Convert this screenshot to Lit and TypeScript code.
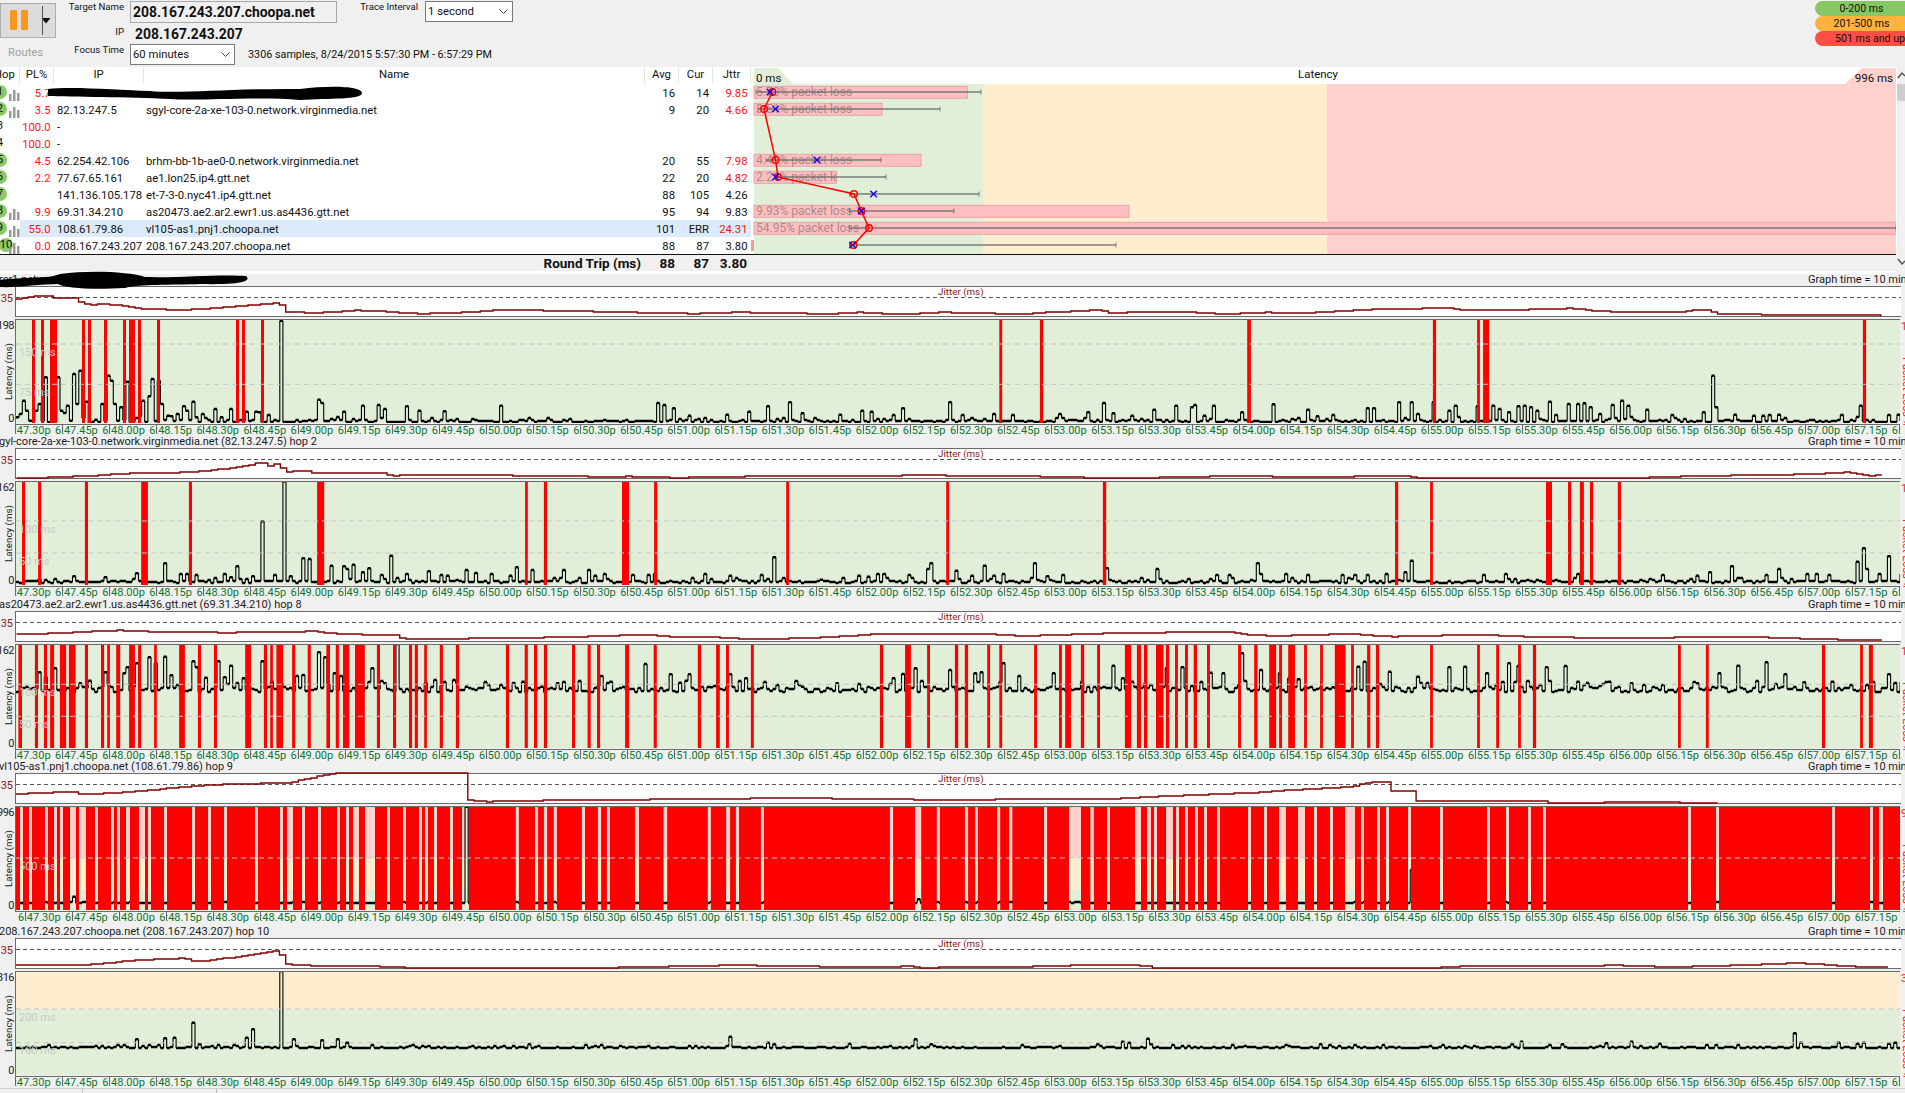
import { LitElement, html, css, svg, unsafeCSS } from "lit";
import { customElement, property } from "lit/decorators.js";

const UI = unsafeCSS(`Roboto, "Liberation Sans", sans-serif`);
const PX = 3.14;
const LEFT = 15;
const W = 1885;

// ---- helpers: numbers below are read in reference-crop coordinates
const xs = (ox: number, s: number, a: number[]) => a.map((v) => ox + v / s);
const pairs = (ox: number, oy: number, sx: number, a: number[]) => {
  const out: [number, number][] = [];
  for (let i = 0; i < a.length; i += 2) out.push([ox + a[i] / sx, oy + a[i + 1] / 3]);
  return out;
};

interface Cfg {
  title: string;
  top: number; // absolute y of latency plot top
  max: string;
  bands: { from: number; to: number; fill: string }[];
  grid: { y: number; label: string }[];
  bars: number[];
  jitterTop: number;
  jitter: [number, number][];
  base: number;
  spikes: [number, number][];
  noise: number;
  seed: number;
  offset: number;
  extra?: boolean;
}

const GREEN = "#e1efd8";
const ORANGE = "#ffedd0";
const PINK = "#ffd1cd";

const hop1Bars = [
  ...xs(0, 3, [93, 102, 120, 129, 147, 168, 243, 252, 261, 270, 309, 318, 366, 375, 384, 402, 411, 420, 468, 477, 705, 714, 723, 732, 780, 789]),
  ...xs(650, 2.412, [840, 847, 938, 946, 1438, 1447]),
  ...xs(1280, 2.509, [381, 389, 492, 499, 507, 522, 1460, 1468]),
];
const hop2Bars = [
  ...xs(0, 2.24, [47, 54, 83, 90, 188, 195, 314, 329, 421, 428, 708, 724, 1174, 1180, 1216, 1223, 1391, 1407, 1463, 1470]),
  ...xs(650, 2.412, [326, 333, 712, 719, 1090, 1098]),
  ...xs(1280, 2.509, [286, 294, 374, 381, 665, 680, 720, 728, 750, 760, 775, 783, 845, 853]),
];
const hop8Bars = [
  ...xs(0, 2.24, [39, 47, 76, 83, 96, 103, 110, 119, 132, 146, 152, 167, 188, 195, 224, 231, 238, 244, 258, 267, 287, 300, 307, 314, 343, 349, 399, 412, 441, 448, 477, 484, 547, 560, 589, 596, 603, 609, 617, 632, 652, 659, 687, 694, 729, 737, 750, 757, 766, 780, 793, 815, 842, 849, 878, 885, 914, 921, 927, 934, 948, 954, 983, 990, 1019, 1026, 1131, 1138, 1173, 1180, 1194, 1201, 1216, 1223, 1279, 1286, 1314, 1321, 1335, 1342, 1398, 1407, 1462, 1469]),
  ...xs(650, 2.412, [113, 121, 157, 166, 181, 188, 241, 248, 552, 560, 613, 627, 666, 673, 733, 741, 757, 765, 811, 818, 840, 847, 924, 931, 984, 991, 999, 1013, 1037, 1045, 1076, 1083, 1143, 1158, 1172, 1182, 1189, 1197, 1218, 1236, 1242, 1250, 1264, 1271, 1288, 1295, 1309, 1317, 1341, 1348, 1416, 1423, 1455, 1463, 1491, 1508, 1515, 1522]),
  ...xs(1280, 2.509, [18, 35, 58, 65, 98, 105, 135, 162, 176, 183, 216, 224, 238, 246, 374, 381, 492, 499, 540, 547, 595, 602, 632, 640, 996, 1003, 1066, 1073, 1357, 1365, 1453, 1460, 1475, 1485]),
];
// hop 9 is the other way round: read as the gaps in a solid red field
const hop9Gaps = [
  ...xs(0, 3, [57, 66, 84, 93, 132, 141, 159, 168, 177, 186, 207, 225, 234, 255, 282, 291, 330, 339, 348, 357, 375, 387, 414, 432, 441, 450, 489, 498, 573, 582, 621, 630, 669, 678, 762, 771, 837, 846, 858, 876, 903, 912, 951, 960, 1008, 1017, 1035, 1044, 1056, 1074, 1092, 1122, 1158, 1167, 1206, 1215, 1254, 1263, 1272, 1281, 1299, 1308, 1347, 1356, 1383, 1404]),
  ...xs(480, 2.24, [78, 85, 121, 128, 141, 148, 163, 170, 226, 233, 262, 269, 282, 289, 345, 354, 409, 417, 508, 515, 549, 558, 571, 578, 627, 634, 916, 923, 972, 986, 1021, 1028, 1084, 1091, 1107, 1113, 1156, 1163, 1183, 1190, 1261, 1268, 1317, 1344, 1365, 1373]),
  ...xs(1100, 3, [18, 27, 102, 120, 138, 150, 159, 168, 195, 216, 225, 234, 252, 261, 282, 291, 309, 318, 348, 357, 441, 450, 489, 498, 534, 555, 591, 612, 639, 648, 687, 696, 732, 762, 780, 789, 828, 837, 855, 864, 921, 930, 1017, 1026, 1158, 1167, 1215, 1224, 1281, 1290, 1326, 1335]),
  ...xs(1500, 3, [561, 570, 645, 654, 993, 1002, 1107, 1116, 1134, 1146]),
];
const gapsToBars = (g: number[]) => [LEFT, ...g, 1900];

const CONFIG: Cfg[] = [
  {
    title: "rcr1.network hop 1",
    top: 319.5,
    max: "198",
    bands: [{ from: 319.5, to: 425.5, fill: GREEN }],
    grid: [{ y: 345, label: "150 ms" }, { y: 385.3, label: "75 ms" }],
    bars: hop1Bars,
    jitterTop: 286.5,
    jitter: [
      ...pairs(0, 270, 3, [44, 90, 70, 86, 110, 80, 135, 80, 150, 88, 200, 88, 215, 86, 230, 98, 260, 108, 300, 105, 340, 108, 400, 118, 460, 120, 520, 124, 600, 120, 700, 112, 800, 105, 830, 97, 845, 130, 950, 131, 1060, 124, 1150, 128, 1250, 134, 1400, 130, 1500, 122]),
      ...pairs(650, 280, 2.412, [100, 104, 200, 100, 330, 102, 420, 105, 490, 100, 600, 106, 700, 100, 800, 103, 900, 105, 950, 100, 1030, 96, 1080, 92, 1100, 102, 1200, 98, 1300, 100, 1380, 105, 1480, 100]),
      ...pairs(1280, 280, 2.509, [0, 103, 100, 100, 200, 92, 300, 90, 420, 86, 440, 94, 600, 92, 720, 88, 800, 97, 900, 100, 1000, 98, 1060, 90, 1090, 105, 1240, 107, 1360, 108, 1440, 108, 1515, 110]),
    ],
    base: 423.5,
    spikes: [
      ...pairs(0, 270, 3, [45, 445, 55, 435, 65, 395, 75, 425, 85, 455, 105, 425, 115, 405, 130, 325, 140, 460, 172, 325, 180, 425, 190, 432, 200, 410, 208, 455, 217, 315, 228, 405, 238, 305, 255, 398, 265, 462, 275, 458, 285, 452, 300, 405, 320, 320, 330, 335, 340, 405, 350, 455, 360, 415, 378, 338, 388, 460, 410, 442, 425, 395, 440, 382, 450, 330, 465, 335, 480, 405, 495, 440, 510, 442, 525, 435, 540, 412, 555, 425, 568, 398, 580, 445, 605, 435, 640, 420, 660, 445, 690, 420, 735, 428, 760, 428, 775, 430, 800, 438, 840, 155, 950, 392, 960, 402, 1020, 428, 1085, 410, 1130, 408, 1150, 420, 1215, 412, 1250, 425, 1330, 427, 1498, 410]),
      ...pairs(650, 280, 2.412, [10, 372, 25, 378, 55, 388, 92, 410, 178, 407, 230, 398, 275, 382, 328, 370, 365, 403, 450, 407, 502, 395, 532, 398, 578, 408, 607, 388, 715, 370, 745, 408, 825, 405, 870, 408, 982, 405, 1048, 400, 1086, 302, 1092, 372, 1108, 403, 1160, 410, 1207, 392, 1260, 380, 1300, 385, 1310, 378, 1330, 410, 1352, 380, 1420, 400, 1495, 376]),
      ...pairs(1280, 280, 2.509, [68, 392, 85, 412, 130, 408, 212, 388, 226, 388, 290, 370, 322, 370, 340, 405, 378, 370, 415, 395, 433, 310, 437, 380, 490, 382, 525, 380, 545, 390, 570, 400, 590, 382, 605, 380, 620, 385, 640, 395, 670, 368, 690, 408, 720, 375, 740, 375, 755, 373, 775, 385, 800, 405, 828, 378, 848, 365, 868, 380, 912, 392, 975, 408, 1055, 400, 1077, 290, 1085, 385, 1135, 407, 1180, 410, 1204, 410, 1220, 408, 1248, 407, 1405, 408, 1450, 380, 1520, 408, 1545, 407]),
    ],
    noise: 2.5,
    seed: 11,
    offset: -7,
  },
  {
    title: "gyl-core-2a-xe-103-0.network.virginmedia.net (82.13.247.5) hop 2",
    top: 481.5,
    max: "162",
    bands: [{ from: 481.5, to: 587.5, fill: GREEN }],
    grid: [{ y: 522, label: "100 ms" }, { y: 554, label: "50 ms" }],
    bars: hop2Bars,
    jitterTop: 448.5,
    jitter: [
      ...pairs(0, 440, 2.24, [35, 116, 100, 116, 105, 113, 200, 112, 210, 108, 300, 102, 420, 100, 480, 92, 550, 80, 580, 68, 590, 82, 620, 73, 630, 98, 680, 96, 700, 102, 850, 102, 870, 110, 950, 108, 1100, 109, 1300, 112, 1350, 116, 1400, 112, 1500, 116]),
      ...pairs(650, 280, 2.412, [130, 595, 300, 590, 500, 592, 650, 588, 800, 592, 920, 592, 1050, 596, 1200, 596, 1450, 590]),
      ...pairs(1280, 280, 2.509, [0, 594, 240, 592, 300, 590, 330, 596, 900, 596, 1000, 592, 1200, 588, 1300, 586, 1420, 580, 1470, 590, 1510, 588, 1522, 596]),
    ],
    base: 584,
    spikes: [
      ...pairs(0, 440, 2.24, [162, 412, 233, 415, 303, 403, 367, 373, 396, 405, 410, 405, 437, 408, 500, 405, 515, 415, 528, 382, 560, 412, 585, 247, 610, 408, 628, 127, 645, 412, 677, 358, 691, 360, 740, 380, 762, 382, 770, 390, 789, 377, 810, 400, 820, 388, 852, 408, 868, 350, 908, 405, 958, 397, 985, 408, 1000, 410, 1042, 393, 1060, 402, 1098, 405, 1136, 410, 1155, 385, 1190, 393, 1254, 393, 1311, 393, 1325, 410, 1346, 405, 1410, 408, 1450, 408, 1460, 405, 1548, 415]),
      ...pairs(650, 280, 2.412, [100, 897, 124, 885, 185, 890, 260, 888, 297, 835, 405, 902, 458, 897, 495, 890, 518, 893, 542, 885, 562, 885, 622, 888, 662, 870, 669, 853, 735, 875, 770, 890, 798, 860, 825, 890, 843, 885, 920, 853, 955, 892, 987, 888, 1100, 868, 1215, 870, 1360, 888, 1395, 888, 1458, 853, 1465, 885, 1525, 885]),
      ...pairs(1280, 280, 2.509, [62, 888, 150, 888, 180, 888, 212, 888, 258, 885, 322, 845, 310, 880, 502, 888, 558, 885, 738, 885, 952, 888, 1040, 890, 1070, 880, 1125, 862, 1218, 888, 1242, 870, 1315, 885, 1340, 885, 1370, 888, 1440, 848, 1456, 808, 1465, 870, 1498, 885, 1518, 832, 1550, 885]),
    ],
    noise: 2.5,
    seed: 23,
    offset: -7,
  },
  {
    title: "as20473.ae2.ar2.ewr1.us.as4436.gtt.net (69.31.34.210) hop 8",
    top: 643.5,
    max: "162",
    bands: [{ from: 643.5, to: 749.5, fill: GREEN }],
    grid: [{ y: 684.3, label: "100 ms" }, { y: 716.3, label: "50 ms" }],
    bars: hop8Bars,
    jitterTop: 610.5,
    jitter: [
      ...pairs(0, 440, 2.24, [35, 582, 120, 580, 200, 574, 260, 571, 350, 576, 400, 575, 500, 578, 700, 574, 750, 582, 880, 586, 900, 596, 1000, 596, 1170, 594, 1290, 590, 1430, 584, 1500, 590]),
      ...pairs(650, 280, 2.412, [150, 1072, 240, 1078, 380, 1074, 550, 1062, 800, 1062, 900, 1068, 1100, 1060, 1180, 1058, 1400, 1056, 1440, 1066]),
      ...pairs(1280, 280, 2.509, [0, 1067, 100, 1064, 170, 1062, 270, 1070, 480, 1064, 660, 1072, 900, 1074, 1000, 1072, 1200, 1072, 1370, 1078, 1470, 1080, 1522, 1082]),
    ],
    base: 692,
    spikes: [
      ...pairs(0, 440, 2.24, [86, 697, 95, 712, 121, 685, 172, 730, 198, 722, 233, 697, 270, 700, 283, 682, 302, 670, 332, 652, 340, 670, 367, 650, 378, 706, 425, 664, 433, 682, 458, 713, 487, 664, 495, 712, 515, 677, 543, 715, 585, 664, 600, 725, 660, 708, 677, 705, 712, 637, 726, 652, 743, 700, 760, 708, 825, 685, 860, 730, 888, 612, 968, 720, 1012, 720, 1040, 740, 1090, 735, 1115, 735, 1163, 725, 1205, 740, 1240, 730, 1345, 708, 1362, 725, 1443, 672, 1500, 703, 1517, 728, 1535, 722]),
      ...pairs(650, 280, 2.412, [45, 1183, 68, 1208, 92, 1183, 140, 1222, 190, 1183, 207, 1203, 223, 1195, 298, 1215, 360, 1220, 442, 1210, 585, 1195, 605, 1182, 638, 1165, 716, 1170, 775, 1180, 797, 1177, 850, 1150, 888, 1188, 965, 1180, 1035, 1205, 1115, 1157, 1133, 1195, 1160, 1205, 1200, 1215, 1240, 1165, 1275, 1162, 1300, 1218, 1350, 1178, 1380, 1180, 1425, 1120, 1465, 1170, 1510, 1180]),
      ...pairs(1280, 280, 2.509, [15, 1195, 40, 1198, 130, 1222, 187, 1160, 203, 1145, 268, 1175, 338, 1190, 415, 1162, 455, 1160, 510, 1165, 517, 1180, 565, 1150, 590, 1158, 660, 1162, 708, 1158, 740, 1205, 795, 1218, 820, 1205, 875, 1210, 910, 1215, 1042, 1210, 1095, 1180, 1140, 1157, 1213, 1147, 1258, 1183, 1312, 1207, 1380, 1205, 1425, 1215, 1518, 1183]),
    ],
    noise: 5,
    seed: 37,
    offset: -7,
  },
  {
    title: "vl105-as1.pnj1.choopa.net (108.61.79.86) hop 9",
    top: 805.5,
    max: "996",
    bands: [
      { from: 805.5, to: 858, fill: PINK },
      { from: 858, to: 890, fill: ORANGE },
      { from: 890, to: 911.5, fill: GREEN },
    ],
    grid: [{ y: 858, label: "500 ms" }],
    bars: gapsToBars(hop9Gaps),
    jitterTop: 772.5,
    jitter: [
      ...pairs(0, 760, 3, [44, 102, 140, 98, 215, 95, 230, 103, 350, 98, 500, 85, 630, 74, 860, 68, 960, 46, 1020, 38, 1390, 38, 1393, 115, 1405, 124, 1450, 124]),
      ...pairs(480, 770, 2.24, [0, 95, 85, 92, 420, 88, 640, 85, 920, 86, 980, 90, 1200, 88, 1470, 85]),
      ...pairs(1100, 770, 3, [0, 85, 120, 82, 240, 76, 450, 68, 600, 58, 750, 50, 790, 38, 860, 34, 862, 64, 928, 64, 930, 94, 1330, 94, 1335, 98, 1500, 98]),
      ...pairs(1500, 760, 3, [130, 126, 650, 128]),
    ],
    base: 903,
    spikes: [
      ...pairs(0, 760, 3, [219, 410, 1389, 140]),
      ...pairs(480, 770, 2.24, [975, 388]),
      ...pairs(1100, 770, 3, [925, 300]),
    ],
    noise: 0.6,
    seed: 41,
    offset: 3,
    extra: true,
  },
  {
    title: "208.167.243.207.choopa.net (208.167.243.207) hop 10",
    top: 969.5,
    max: "316",
    bands: [
      { from: 969.5, to: 1008, fill: ORANGE },
      { from: 1008, to: 1075.5, fill: GREEN },
    ],
    grid: [{ y: 1008, label: "200 ms" }, { y: 1041.7, label: "100 ms" }],
    bars: [],
    jitterTop: 936.5,
    jitter: [
      ...pairs(0, 760, 3, [44, 612, 100, 612, 110, 613, 280, 610, 360, 602, 400, 597, 540, 592, 570, 600, 610, 600, 740, 582, 830, 568, 845, 610, 960, 615, 1100, 615, 1210, 620, 1440, 620]),
      ...pairs(480, 770, 2.24, [0, 590, 300, 590, 335, 587, 500, 586, 550, 581, 620, 584, 830, 588, 960, 586, 980, 590, 1185, 587, 1280, 586, 1350, 581, 1490, 584]),
      ...pairs(1100, 770, 3, [0, 584, 50, 580, 140, 584, 150, 590, 370, 590, 850, 590, 1000, 590, 1080, 586, 1250, 584, 1500, 584]),
      ...pairs(1500, 760, 3, [0, 614, 300, 612, 500, 618, 800, 610, 880, 606, 1080, 618, 1170, 620]),
    ],
    base: 1047.5,
    spikes: [
      ...pairs(0, 760, 3, [405, 835, 490, 832, 515, 830, 568, 785, 595, 850, 730, 830, 755, 805, 840, 630, 877, 835, 963, 838, 1010, 835, 1030, 845]),
      ...pairs(480, 770, 2.24, [108, 820, 558, 797, 637, 815, 655, 820, 825, 818, 972, 805, 1008, 820, 1380, 820, 1432, 812, 1445, 815, 1488, 802]),
      ...pairs(1100, 770, 3, [57, 812, 75, 815, 132, 803, 150, 820, 388, 822, 650, 820, 678, 822, 980, 825, 1225, 820, 1255, 812, 1378, 822]),
      ...pairs(1500, 760, 3, [55, 842, 175, 850, 310, 847, 385, 842, 470, 848, 640, 852, 880, 817, 895, 845, 1005, 845, 1065, 848, 1085, 845, 1155, 848, 1175, 845]),
    ],
    noise: 1.6,
    seed: 53,
    offset: -7,
  },
];

function rng(seed: number) {
  let s = seed * 9973 + 7;
  return () => {
    s = (s * 16807) % 2147483647;
    return (s & 0xffff) / 0xffff;
  };
}

// the trace is a step line: flats come out heavy and risers thin in the reference
function latencyPaths(c: Cfg): { flats: string; risers: string } {
  const r = rng(c.seed);
  const n = Math.ceil(W / PX);
  const ys: number[] = [];
  for (let i = 0; i < n; i++) {
    const v = r();
    let y = c.base - r() * c.noise;
    if (v > 0.9) y -= c.noise * 1.2;
    ys.push(Math.round(y));
  }
  for (const [x, y] of c.spikes) {
    const i = Math.round((x - LEFT) / PX);
    if (i >= 0 && i < n) ys[i] = y;
  }
  const off = c.top + 1.5;
  let flats = "";
  let risers = "";
  ys.forEach((y, i) => {
    const a = (i * PX).toFixed(1);
    const b = ((i + 1) * PX).toFixed(1);
    const yy = (y - off).toFixed(1);
    flats += `M${a} ${yy}H${b}`;
    if (i + 1 < n) risers += `M${b} ${yy}V${(ys[i + 1] - off).toFixed(1)}`;
  });
  return { flats, risers };
}

function jitterPath(c: Cfg): string {
  const p = c.jitter;
  const startX = p[0][0];
  const endX = p[p.length - 1][0];
  let d = "";
  let j = 0;
  for (let x = startX; x <= endX; x += PX * 2) {
    while (j < p.length - 2 && p[j + 1][0] < x) j++;
    const [x0, y0] = p[j];
    const [x1, y1] = p[j + 1];
    const t = x1 === x0 ? 1 : Math.min(1, Math.max(0, (x - x0) / (x1 - x0)));
    const y = Math.round(y0 + (y1 - y0) * t) - c.jitterTop - 1.5;
    const X = (x - LEFT).toFixed(1);
    d += d ? `H${X}V${y}` : `M${X} ${y}`;
  }
  return d;
}

function axisLabels(): string[] {
  const out: string[] = [];
  let m = 47;
  let s = 30;
  for (let i = 0; i < 41; i++) {
    out.push(`6:${m}.${String(s).padStart(2, "0")}p`);
    s += 15;
    if (s === 60) {
      s = 0;
      m++;
    }
  }
  return out;
}
const LABELS = axisLabels();

@customElement("hop-graph")
class HopGraph extends LitElement {
  @property({ attribute: false }) cfg!: Cfg;

  static styles = css`
    :host { display: block; font-family: ${UI}; }
    .title { height: 12px; display: flex; justify-content: space-between; font-size: 11px; line-height: 12px; color: #1c1c1c; white-space: nowrap; overflow: hidden; }
    .title .name { margin-left: -1px; }
    .title .time { width: 97px; flex: none; }
    .row { display: flex; }
    .gutter { width: 15px; flex: none; display: flex; flex-direction: column; align-items: flex-end; }
    .right { flex: 1; overflow: hidden; }
    .jit { height: 31px; }
    .jit .num { color: #8a2020; font-size: 11px; line-height: 12px; margin: 7px 2px 0 0; }
    .jplot { width: 1886px; height: 31px; background: #fff; border-top: 1.5px solid #6a6a6a; border-bottom: 1.5px solid #6a6a6a; border-left: 1px solid #6a6a6a; box-sizing: border-box; flex: none; position: relative; }
    .jplot svg { overflow: visible; }
    .jitter-cap { position: absolute; left: 922px; top: -1px; font-size: 9.8px; line-height: 11px; color: #8a2020; }
    svg { display: block; }
    .lat { height: 106px; margin-top: 2px; }
    .lplot { width: 1885px; height: 106px; border-top: 1.5px solid #6a6a6a; border-bottom: 1.5px solid #6a6a6a; border-left: 1px solid #6a6a6a; box-sizing: border-box; flex: none; overflow: hidden; }
    .gutter .top, .gutter .zero { font-size: 11px; line-height: 13px; color: #222; white-space: nowrap; margin-right: 1px; letter-spacing: -0.5px; }
    .gutter .mid { flex: 1; display: flex; align-items: center; justify-content: center; width: 15px; padding-left: 3px; box-sizing: border-box; }
    .vert { writing-mode: vertical-rl; transform: rotate(180deg); font-size: 9.8px; line-height: 12px; color: #222; white-space: nowrap; }
    .right .loss { writing-mode: vertical-rl; color: #ff2020; font-size: 11px; line-height: 12px; white-space: nowrap; margin: 24px 0 0 0; }
    .right .r35 { color: #ff2020; font-size: 11px; line-height: 12px; margin: 2px 0 0 1px; white-space: nowrap; }
    .axis { height: 11.5px; margin-left: 15px; width: 1886px; display: flex; overflow: hidden; font-size: 11px; line-height: 12px; color: #08782a; white-space: nowrap; }
    .axis.extra { height: 13.5px; }
    .axis .t { flex: 0 0 47.1px; position: relative; }
    .axis .t::before { content: ""; position: absolute; left: 7px; top: 0; width: 1px; height: 8px; background: #666; }
  `;

  render() {
    const c = this.cfg;
    const h = 103;
    const w = 1884;
    const trace = latencyPaths(c);
    return html`
      <div class="title"><span class="name">${c.title}</span><span class="time">Graph time = 10 minutes</span></div>
      <div class="row jit">
        <div class="gutter"><div class="num">35</div></div>
        <div class="jplot">
          <svg width="1885" height="28" viewBox="0 0 1885 28">
            <line x1="0" x2="1885" y1="10.5" y2="10.5" stroke="#555" stroke-width="1" stroke-dasharray="4 3"></line>
            <path d=${jitterPath(c)} fill="none" stroke="#800000" stroke-width="1.4"></path>
          </svg>
          <div class="jitter-cap">Jitter (ms)</div>
        </div>
      </div>
      <div class="row lat">
        <div class="gutter">
          <div class="top">${c.max}</div>
          <div class="mid"><div class="vert">Latency (ms)</div></div>
          <div class="zero">0</div>
        </div>
        <div class="lplot">
          <svg width=${w} height=${h} viewBox="0 0 ${w} ${h}">
            ${c.bands.map((b) => svg`<rect x="0" y=${b.from - c.top - 1.5} width=${w} height=${b.to - b.from + 1.5} fill=${b.fill}></rect>`)}
            <path d=${trace.flats} fill="none" stroke="#000" stroke-width="2.4"></path>
            <path d=${trace.risers} fill="none" stroke="#000" stroke-width="1.1"></path>
            ${this.bars(c, h)}
            ${c.grid.map(
              (g) => svg`<line x1="0" x2=${w} y1=${g.y - c.top - 1.5} y2=${g.y - c.top - 1.5} stroke="#c4c4c4" stroke-width="1" stroke-dasharray="5 4"></line>
                <text x="3" y=${g.y - c.top + 10} font-size="11" fill="#c9c9c9" font-family="Roboto, sans-serif">${g.label}</text>`
            )}
          </svg>
        </div>
        <div class="right">
          <div class="r35">${c.max}</div>
          <div class="loss">Packet Loss %</div>
        </div>
      </div>
      <div class="axis ${c.extra ? "extra" : ""}">
        ${LABELS.map((l, i) => html`<div class="t" style=${i === 0 ? `margin-left:${c.offset}px` : ""}>${l}</div>`)}
      </div>
    `;
  }

  bars(c: Cfg, h: number) {
    const out = [];
    for (let i = 0; i + 1 < c.bars.length; i += 2) {
      const a = c.bars[i] - LEFT;
      const b = c.bars[i + 1] - LEFT;
      out.push(svg`<rect x=${a.toFixed(1)} y="0" width=${(b - a).toFixed(1)} height=${h} fill="#ff0000"></rect>`);
    }
    return out;
  }
}

interface Row {
  hop: string;
  pl: string;
  ip: string;
  name: string;
  avg: string;
  cur: string;
  jit: string;
  jitRed: boolean;
  chip: boolean;
  bars: boolean;
  selected?: boolean;
}

const ROWS: Row[] = [
  { hop: "1", pl: "5.7", ip: "", name: "", avg: "16", cur: "14", jit: "9.85", jitRed: true, chip: true, bars: true },
  { hop: "2", pl: "3.5", ip: "82.13.247.5", name: "sgyl-core-2a-xe-103-0.network.virginmedia.net", avg: "9", cur: "20", jit: "4.66", jitRed: true, chip: true, bars: true },
  { hop: "3", pl: "100.0", ip: "-", name: "", avg: "", cur: "", jit: "", jitRed: false, chip: false, bars: false },
  { hop: "4", pl: "100.0", ip: "-", name: "", avg: "", cur: "", jit: "", jitRed: false, chip: false, bars: false },
  { hop: "5", pl: "4.5", ip: "62.254.42.106", name: "brhm-bb-1b-ae0-0.network.virginmedia.net", avg: "20", cur: "55", jit: "7.98", jitRed: true, chip: true, bars: false },
  { hop: "6", pl: "2.2", ip: "77.67.65.161", name: "ae1.lon25.ip4.gtt.net", avg: "22", cur: "20", jit: "4.82", jitRed: true, chip: true, bars: false },
  { hop: "7", pl: "", ip: "141.136.105.178", name: "et-7-3-0.nyc41.ip4.gtt.net", avg: "88", cur: "105", jit: "4.26", jitRed: false, chip: true, bars: false },
  { hop: "8", pl: "9.9", ip: "69.31.34.210", name: "as20473.ae2.ar2.ewr1.us.as4436.gtt.net", avg: "95", cur: "94", jit: "9.83", jitRed: false, chip: true, bars: true },
  { hop: "9", pl: "55.0", ip: "108.61.79.86", name: "vl105-as1.pnj1.choopa.net", avg: "101", cur: "ERR", jit: "24.31", jitRed: true, chip: true, bars: true, selected: true },
  { hop: "10", pl: "0.0", ip: "208.167.243.207", name: "208.167.243.207.choopa.net", avg: "88", cur: "87", jit: "3.80", jitRed: false, chip: true, bars: true },
];

// row marks inside the latency pane, in page x
const MARKS: { row: number; bar?: number; text?: string; lo: number; hi: number; avg: number; cur?: number }[] = [
  { row: 0, bar: 967.4, text: "5.70% packet loss", lo: 756, hi: 981, avg: 772.4, cur: 770 },
  { row: 1, bar: 882, text: "3.51% packet loss", lo: 758, hi: 940, avg: 764, cur: 775.6 },
  { row: 4, bar: 921, text: "4.49% packet loss", lo: 766, hi: 881, avg: 775.6, cur: 817 },
  { row: 5, bar: 836.5, text: "2.21% packet loss", lo: 776, hi: 886, avg: 778, cur: 775.6 },
  { row: 6, lo: 849.5, hi: 979, avg: 854, cur: 873.6 },
  { row: 7, bar: 1129, text: "9.93% packet loss", lo: 849.5, hi: 954, avg: 861.4, cur: 861.4 },
  { row: 8, bar: 1896, text: "54.95% packet loss", lo: 849.5, hi: 1896, avg: 869 },
  { row: 9, lo: 849.5, hi: 1116, avg: 853.5, cur: 852.7 },
];

@customElement("app-root")
export class AppRoot extends LitElement {
  static styles = css`
    :host { display: block; position: relative; width: 1905px; height: 1093px; overflow: hidden; background: #f0f0f0; font-family: ${UI}; font-size: 11.3px; color: #111; }
    .top { height: 67px; display: flex; }
    .left { width: 62px; flex: none; }
    .btn { width: 56px; height: 35px; margin-top: 3px; box-sizing: border-box; background: #dcdcdc; border: 1px solid #adadad; display: flex; align-items: center; position: relative; }
    .btn .sep { position: absolute; left: 41px; top: 2px; bottom: 2px; width: 1px; background: #555; }
    .btn svg { display: block; }
    .routes { color: #a2a2a2; margin: 8px 0 0 8px; line-height: 14px; }
    .form { display: flex; flex-direction: column; margin-top: 1px; }
    .frow { display: flex; align-items: flex-start; }
    .frow.r1 { height: 22px; }
    .frow.r2 { height: 21px; }
    .frow.r3 { height: 21px; }
    .lb { width: 62px; flex: none; text-align: right; line-height: 12px; white-space: nowrap; font-size: 9.6px; }
    .lb.mid { padding-top: 3px; }
    .lb.trace { width: 58px; margin: 0 7px 0 23px; }
    .tbox { margin-left: 6px; background: #f0f0f0; border: 1px solid #a8a8a8; width: 207px; flex: none; box-sizing: border-box; height: 22px; font-weight: 700; font-size: 13.9px; line-height: 20px; padding-left: 2px; white-space: nowrap; }
    .ipval { margin-left: 11px; font-weight: 700; font-size: 13.9px; line-height: 21px; white-space: nowrap; padding-top: 1px; }
    .sel { background: #fff; border: 1px solid #7a7a7a; box-sizing: border-box; height: 21px; flex: none; display: flex; align-items: center; justify-content: space-between; padding: 0 4px 0 2px; white-space: nowrap; }
    .sel.trace { width: 88px; }
    .sel.focus { margin-left: 6px; width: 105px; }
    .info { margin-left: 13px; white-space: nowrap; line-height: 19px; padding-top: 1px; font-size: 10.8px; }
    .legend { margin-left: auto; width: 90px; margin-top: 1px; }
    .pill { height: 15px; line-height: 15px; text-align: center; border-radius: 7.5px 0 0 7.5px; font-size: 10.6px; color: #111; padding-left: 3px; }
    .pill.g { background: #86c763; }
    .pill.o { background: #ffb23e; }
    .pill.r { background: #ff4f44; }

    .table { display: flex; height: 187px; background: #fff; }
    .cols { width: 751px; flex: none; }
    .head, .tr { display: grid; grid-template-columns: 20px 34px 90px 501px 34px 34px 38px; }
    .head { height: 17px; line-height: 15px; }
    .head div { text-align: center; border-right: 1px solid #e6e6e6; }
    .head .hopc { text-align: left; margin-left: -6px; }
    .tr { height: 17px; line-height: 19px; white-space: nowrap; }
    .tr.sel-row { background: linear-gradient(to right, transparent 20px, #dcebfb 20px); }
    .hopc2 { position: relative; }
    .chip { position: absolute; left: -7px; top: 1px; width: 14px; height: 14px; border-radius: 7px; text-align: center; line-height: 14px; }
    .chip.on { background: #8cc866; }
    .chip.wide { left: -1px; width: 14px; }
    .hopbars { position: absolute; left: 9px; top: 6px; }
    .r { text-align: right; }
    .red { color: #f11; }
    .plc { padding-right: 3.5px; }
    .ipc { padding-left: 3px; }
    .namec { padding-left: 2px; }
    .avgc { padding-right: 4px; }
    .curc { padding-right: 4px; }
    .jitc { padding-right: 3.5px; }
    .lat-pane { flex: none; width: 1145px; }
    .lat-pane svg { display: block; }
    .scroll { flex: 1; background: #f0f0f0; margin-left: 1px; position: relative; }
    .thumb { position: absolute; left: 0; right: 0; top: 17px; height: 17px; background: #cdcdcd; }
    .scroll-down { position: absolute; left: 0; top: 188px; }
    .rule { height: 1.5px; background: #111; margin-top: -0.5px; width: 1896px; }
    .round { height: 15.5px; width: 751px; display: grid; grid-template-columns: 645px 34px 34px 38px; font-weight: 700; font-size: 13.5px; line-height: 16px; white-space: nowrap; }
    .round div { text-align: right; padding-right: 4px; }
    .band { height: 3px; background: #fff; width: 1896px; }
    .foot { height: 6px; border-top: 1px solid #d0d0d0; display: flex; font-size: 11px; line-height: 12px; overflow: hidden; white-space: nowrap; }
    .foot div { padding: 3px 0 0 4px; border-right: 1px solid #bdbdbd; box-sizing: border-box; flex: none; }
    .foot .f1 { width: 83px; }
    .foot .f2 { width: 134px; word-spacing: 14px; }
    .ink { position: absolute; left: 0; top: 0; pointer-events: none; }
  `;

  latencyPane() {
    const ox = 751;
    const oy = 67;
    const rowY = (i: number) => 92 + 17 * i - oy;
    return html`<svg width="1145" height="187" viewBox="0 0 1145 187" font-family="Roboto, sans-serif">
      <polygon points=${`${754 - ox},1 ${778 - ox},1 ${793 - ox},17 ${983 - ox},17 ${983 - ox},187 ${754 - ox},187`} fill=${GREEN}></polygon>
      <rect x=${983 - ox} y="17" width=${1327 - 983} height="170" fill=${ORANGE}></rect>
      <polygon points=${`${1327 - ox},17 ${1845 - ox},17 ${1862 - ox},1 ${1896 - ox},1 ${1896 - ox},187 ${1327 - ox},187`} fill=${PINK}></polygon>
      <text x=${756 - ox} y="15" font-size="11.5" fill="#111">0 ms</text>
      <text x=${1318 - ox} y="11" font-size="11.5" fill="#111" text-anchor="middle">Latency</text>
      <text x=${1893 - ox} y="15" font-size="11.5" fill="#111" text-anchor="end">996 ms</text>
      <rect x="0" y=${rowY(9) - 5} width="3" height="11" fill="#e8a0a0"></rect>
      ${MARKS.filter((m) => m.bar).map(
        (m) => svg`<rect x=${754 - ox} y=${rowY(m.row) - 5.7} width=${m.bar! - 754} height="12" fill="#ffbfc0" stroke="#e9a3a5" stroke-width="1"></rect>
          <svg x=${754 - ox} y=${rowY(m.row) - 9} width=${m.bar! - 754} height="18"><text x="2" y="13" font-size="12" fill="#a98a8a">${m.text}</text></svg>`
      )}
      ${MARKS.map(
        (m) => svg`<line x1=${m.lo - ox} x2=${m.hi - ox} y1=${rowY(m.row)} y2=${rowY(m.row)} stroke="#6a6a6a" stroke-opacity=".65" stroke-width="2"></line>
          <line x1=${m.lo - ox} x2=${m.lo - ox} y1=${rowY(m.row) - 2.5} y2=${rowY(m.row) + 2.5} stroke="#6a6a6a" stroke-opacity=".8"></line>
          <line x1=${m.hi - ox} x2=${m.hi - ox} y1=${rowY(m.row) - 2.5} y2=${rowY(m.row) + 2.5} stroke="#6a6a6a" stroke-opacity=".8"></line>`
      )}
      <polyline points=${MARKS.map((m) => `${m.avg - ox},${rowY(m.row)}`).join(" ")} fill="none" stroke="#f00" stroke-width="1.5"></polyline>
      ${MARKS.map(
        (m) => svg`<circle cx=${m.avg - ox} cy=${rowY(m.row)} r="3.3" fill="none" stroke="#f00" stroke-width="1.4"></circle>`
      )}
      ${MARKS.filter((m) => m.cur).map(
        (m) => svg`<path d=${`M${m.cur! - ox - 3.3} ${rowY(m.row) - 3.3}l6.6 6.6m0 -6.6l-6.6 6.6`} stroke="#10d" stroke-width="1.3" fill="none"></path>`
      )}
    </svg>`;
  }

  chev() {
    return html`<svg width="9" height="6" viewBox="0 0 9 6"><path d="M0.5 0.5L4.5 4.5L8.5 0.5" fill="none" stroke="#444" stroke-width="1"></path></svg>`;
  }

  render() {
    return html`
      <div class="top">
        <div class="left">
          <div class="btn">
            <svg width="40" height="33" viewBox="0 0 40 33">
              <rect x="9" y="6" width="7" height="20" rx="1" fill="#f59a1e"></rect>
              <rect x="20" y="6" width="7" height="20" rx="1" fill="#f59a1e"></rect>
            </svg>
            <div class="sep"></div>
            <svg width="12" height="33" viewBox="0 0 12 33"><path d="M0.5 14H9.5L5 19.5Z" fill="#111"></path></svg>
          </div>
          <div class="routes">Routes</div>
        </div>
        <div class="form">
          <div class="frow r1">
            <div class="lb">Target Name</div>
            <div class="tbox">208.167.243.207.choopa.net</div>
            <div class="lb trace">Trace Interval</div>
            <div class="sel trace">1 second ${this.chev()}</div>
          </div>
          <div class="frow r2">
            <div class="lb mid">IP</div>
            <div class="ipval">208.167.243.207</div>
          </div>
          <div class="frow r3">
            <div class="lb">Focus Time</div>
            <div class="sel focus">60 minutes ${this.chev()}</div>
            <div class="info">3306 samples, 8/24/2015 5:57:30 PM - 6:57:29 PM</div>
          </div>
        </div>
        <div class="legend">
          <div class="pill g">0-200 ms</div>
          <div class="pill o">201-500 ms</div>
          <div class="pill r">501 ms and up</div>
        </div>
      </div>

      <div class="table">
        <div class="cols">
          <div class="head">
            <div class="hopc">Hop</div><div>PL%</div><div>IP</div><div>Name</div><div>Avg</div><div>Cur</div><div>Jttr</div>
          </div>
          ${ROWS.map(
            (r) => html`<div class="tr ${r.selected ? "sel-row" : ""}">
              <div class="hopc2">
                <div class="chip ${r.chip ? "on" : ""} ${r.hop === "10" ? "wide" : ""}">${r.hop}</div>
                ${r.bars
                  ? html`<svg class="hopbars" width="11" height="11" viewBox="0 0 11 11">
                      <rect x="0" y="4" width="2.5" height="7" fill="#9a9a9a"></rect>
                      <rect x="4" y="0" width="2.5" height="11" fill="#9a9a9a"></rect>
                      <rect x="8" y="3" width="2.5" height="8" fill="#9a9a9a"></rect>
                    </svg>`
                  : ""}
              </div>
              <div class="r red plc">${r.pl}</div>
              <div class="ipc">${r.ip}</div>
              <div class="namec">${r.name}</div>
              <div class="r avgc">${r.avg}</div>
              <div class="r curc">${r.cur}</div>
              <div class="r jitc ${r.jitRed ? "red" : ""}">${r.jit}</div>
            </div>`
          )}
        </div>
        <div class="lat-pane">${this.latencyPane()}</div>
        <div class="scroll">
          <svg width="8" height="17" viewBox="0 0 8 17"><path d="M1 11L5 6L8 9" fill="none" stroke="#555" stroke-width="1.5"></path></svg>
          <div class="thumb"></div>
          <svg class="scroll-down" width="8" height="12" viewBox="0 0 8 12"><path d="M1 4L5 9L8 6" fill="none" stroke="#555" stroke-width="1.5"></path></svg>
        </div>
      </div>
      <div class="rule"></div>
      <div class="round">
        <div>Round Trip (ms)</div><div>88</div><div>87</div><div>3.80</div>
      </div>
      <div class="band"></div>
      ${CONFIG.map((c) => html`<hop-graph .cfg=${c}></hop-graph>`)}
      <div class="foot">
        <div class="f1">Trace</div>
        <div class="f2">Trace Count: 10000</div>
      </div>
      <svg class="ink" width="400" height="300" viewBox="0 0 400 300">
        <path d="M48 89C70 86 120 90 150 91C180 94 240 88 300 89C330 85 362 86 362 93C362 100 330 98 300 100C260 96 200 101 170 99C130 97 70 97 48 96Z" fill="#000"></path>
        <path d="M0 280C20 277 50 279 60 274C90 270 130 272 145 277C180 278 220 274 246 276C252 281 242 285 200 284C170 285 140 284 125 288C90 290 65 288 58 284C40 284 15 288 0 287Z" fill="#000"></path>
      </svg>
    `;
  }
}
